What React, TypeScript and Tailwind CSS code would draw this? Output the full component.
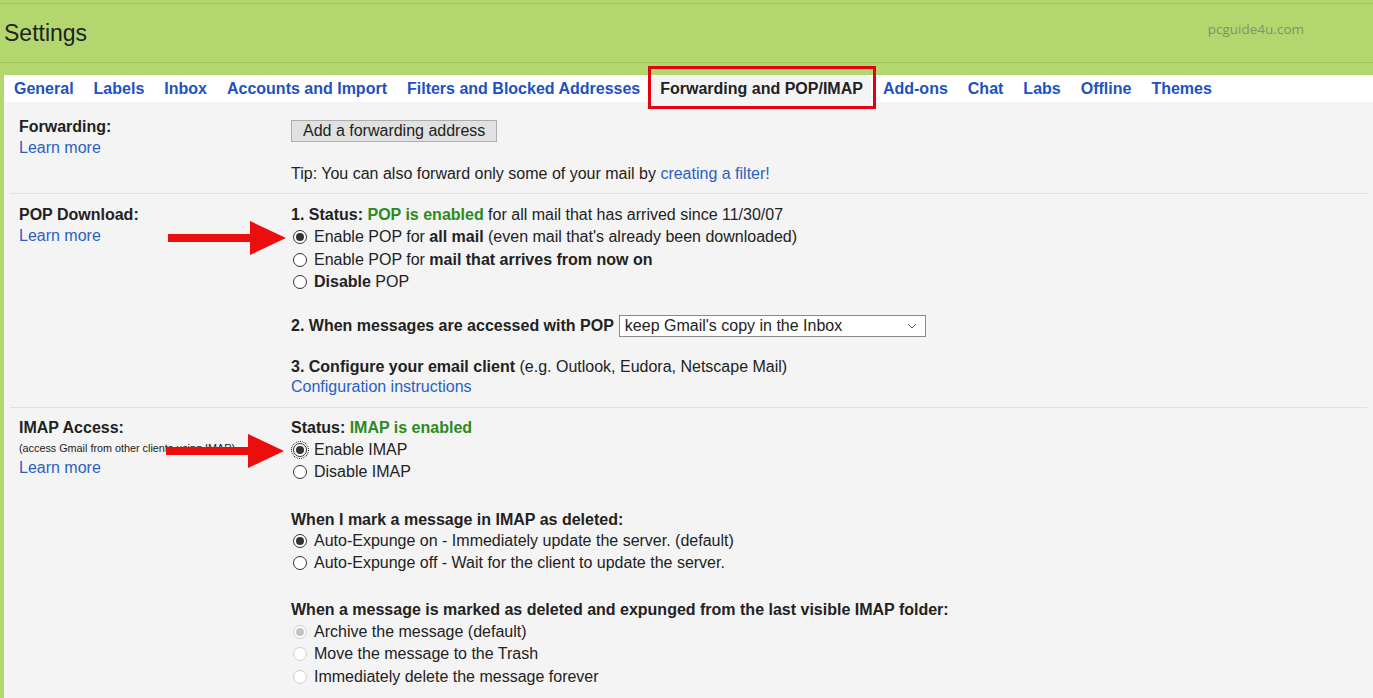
import React from 'react';

const tabs = [
    'General',
    'Labels',
    'Inbox',
    'Accounts and Import',
    'Filters and Blocked Addresses',
    'Forwarding and POP/IMAP',
    'Add-ons',
    'Chat',
    'Labs',
    'Offline',
    'Themes',
];

function Radio({ checked = false, disabled = false, focused = false }: { checked?: boolean; disabled?: boolean; focused?: boolean }) {
    return (
        <span
            className={`ml-[2px] mr-[7px] inline-flex h-[14px] w-[14px] shrink-0 items-center justify-center rounded-full border bg-white ${
                disabled ? 'border-[#cfcfcf]' : 'border-[#333]'
            } ${focused ? 'outline outline-1 outline-dotted outline-offset-1 outline-black' : ''}`}
        >
            {checked && <span className={`h-[8px] w-[8px] rounded-full ${disabled ? 'bg-[#c4c4c4]' : 'bg-[#333]'}`} />}
        </span>
    );
}

function Option({ children, checked, disabled, focused }: { children: React.ReactNode; checked?: boolean; disabled?: boolean; focused?: boolean }) {
    return (
        <div className="flex h-[22.5px] items-center">
            <Radio checked={checked} disabled={disabled} focused={focused} />
            <span>{children}</span>
        </div>
    );
}

function Arrow({ x, y }: { x: number; y: number }) {
    // x,y = tip of the arrow
    return (
        <svg className="pointer-events-none absolute" style={{ left: x - 118, top: y - 18 }} width="118" height="36" viewBox="0 0 118 36">
            <rect x="0" y="14" width="84" height="8" fill="#ec0d0d" />
            <polygon points="82,1 118,18 82,35" fill="#ec0d0d" />
        </svg>
    );
}

export default function App() {
    return (
        <div className="relative min-h-[698px] overflow-hidden bg-[#b2d76f] font-['Liberation_Sans',Arial,sans-serif] text-[16px] text-[#222]">
            {/* header */}
            <div className="h-[3px]" />
            <div className="h-px bg-[#9dc35a]" />
            <div className="flex h-[58px] items-center justify-between pl-1 pr-[69px]">
                <h1 className="text-[23px] text-[#222]">Settings</h1>
                <span className="mb-2 font-['Open_Sans',sans-serif] text-[13.5px] text-[#7f9468]">pcguide4u.com</span>
            </div>
            <div className="h-px bg-[#9dc35a]" />
            <div className="h-[12px]" />

            {/* tabs */}
            <div className="ml-1 flex h-[27px] items-center gap-5 bg-white pl-[10px]">
                {tabs.map(t =>
                    t === 'Forwarding and POP/IMAP' ? (
                        <span key={t} className="relative -mx-2 flex h-full items-center bg-[#f4f4f4] px-2 font-bold text-[#222]">
                            {t}
                            <span className="absolute -bottom-[7px] -left-1 -right-[5px] -top-[9px] border-[3px] border-[#e3000f]" />
                        </span>
                    ) : (
                        <a key={t} className="font-bold text-[#2152bd]">
                            {t}
                        </a>
                    )
                )}
            </div>

            {/* content */}
            <div className="ml-1 min-h-[596px] bg-[#f4f4f4] px-[6px] leading-[22px]">
                {/* Forwarding */}
                <section className="flex border-b border-[#e0e0e0] pb-[8px] pt-[14px]">
                    <div className="w-[281px] shrink-0 pl-[9px] leading-[21px]">
                        <div className="font-bold">Forwarding:</div>
                        <a className="text-[#2a5fc4]">Learn more</a>
                    </div>
                    <div>
                        <button className="mt-[4px] h-[22px] border border-[#adadad] bg-[#e1e1e1] px-[11px] leading-[20px] text-[#222]">
                            Add a forwarding address
                        </button>
                        <div className="mt-[21px]">
                            Tip: You can also forward only some of your mail by <a className="text-[#2a5fc4]">creating a filter!</a>
                        </div>
                    </div>
                </section>

                {/* POP */}
                <section className="flex border-b border-[#e0e0e0] pb-[10px] pt-[10px]">
                    <div className="w-[281px] shrink-0 pl-[9px] leading-[21px]">
                        <div className="font-bold">POP Download:</div>
                        <a className="text-[#2a5fc4]">Learn more</a>
                    </div>
                    <div>
                        <div>
                            <b>1. Status: </b>
                            <b className="text-[#2b8a1e]">POP is enabled</b> for all mail that has arrived since 11/30/07
                        </div>
                        <Option checked>
                            Enable POP for <b>all mail</b> (even mail that's already been downloaded)
                        </Option>
                        <Option>
                            Enable POP for <b>mail that arrives from now on</b>
                        </Option>
                        <Option>
                            <b>Disable</b> POP
                        </Option>
                        <div className="mt-[21px] flex items-center">
                            <b>2. When messages are accessed with POP</b>
                            <div className="ml-[5px] flex h-[22px] w-[307px] items-center justify-between border border-[#8a8a8a] bg-white pl-[5px] pr-[8px]">
                                <span>keep Gmail's copy in the Inbox</span>
                                <svg width="10" height="6" viewBox="0 0 10 6">
                                    <path d="M1 1l4 4 4-4" fill="none" stroke="#555" strokeWidth="1" />
                                </svg>
                            </div>
                        </div>
                        <div className="mt-[20px] leading-[20px]">
                            <b>3. Configure your email client</b> (e.g. Outlook, Eudora, Netscape Mail)
                        </div>
                        <a className="block leading-[20px] text-[#2a5fc4]">Configuration instructions</a>
                    </div>
                </section>

                {/* IMAP */}
                <section className="flex pb-4 pt-[9px]">
                    <div className="w-[281px] shrink-0 pl-[9px]">
                        <div className="font-bold">IMAP Access:</div>
                        <div className="text-[10.8px] leading-[18px]">(access Gmail from other clients using IMAP)</div>
                        <a className="text-[#2a5fc4]">Learn more</a>
                    </div>
                    <div>
                        <div>
                            <b>Status: </b>
                            <b className="text-[#2b8a1e]">IMAP is enabled</b>
                        </div>
                        <Option checked focused>
                            Enable IMAP
                        </Option>
                        <Option>Disable IMAP</Option>

                        <div className="mt-[26px] font-bold leading-[20px]">When I mark a message in IMAP as deleted:</div>
                        <Option checked>Auto-Expunge on - Immediately update the server. (default)</Option>
                        <Option>Auto-Expunge off - Wait for the client to update the server.</Option>

                        <div className="mt-[24px] font-bold">
                            When a message is marked as deleted and expunged from the last visible IMAP folder:
                        </div>
                        <Option checked disabled>
                            Archive the message (default)
                        </Option>
                        <Option disabled>Move the message to the Trash</Option>
                        <Option disabled>Immediately delete the message forever</Option>
                    </div>
                </section>
            </div>

            {/* red annotation arrows */}
            <Arrow x={286} y={238} />
            <Arrow x={284} y={451} />
        </div>
    );
}
